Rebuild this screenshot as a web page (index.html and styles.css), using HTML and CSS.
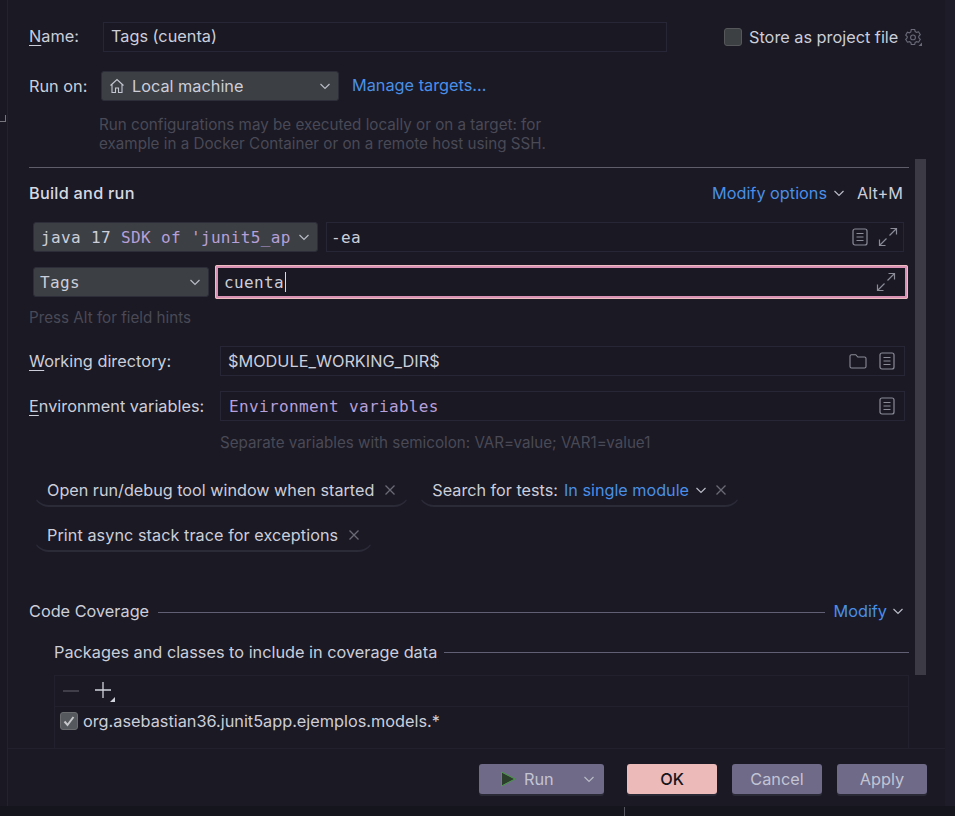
FILE: index.html
```html
<!DOCTYPE html>
<html lang="en">
<head>
<meta charset="utf-8">
<title>Run/Debug Configurations</title>
<link rel="stylesheet" href="styles.css">
</head>
<body>
<svg class="defs" width="0" height="0" aria-hidden="true">
  <symbol id="chev" viewBox="0 0 12 12"><path d="M1.500 4l4.500 4.500L10.500 4" fill="none" stroke="currentColor" stroke-width="1.200"/></symbol>
  <symbol id="doc" viewBox="0 0 16 18"><rect x="1" y="1" width="14" height="16" rx="2" fill="none" stroke="currentColor" stroke-width="1.200"/><path d="M4.500 5.500h7M4.500 9h7M4.500 12.500h7" fill="none" stroke="currentColor" stroke-width="1.200"/></symbol>
  <symbol id="expand" viewBox="0 0 20 20"><path d="M11.500 8.500L18.500 1.500M12.500 1.500h6v6M8.500 11.500L1.500 18.500M1.500 12.500v6h6" fill="none" stroke="currentColor" stroke-width="1.200"/></symbol>
  <symbol id="close" viewBox="0 0 12 12"><path d="M1.500 1.500l9 9M10.500 1.500l-9 9" fill="none" stroke="currentColor" stroke-width="1.300"/></symbol>
</svg>
<div class="window">
  <div class="strip-left"><span class="strip-mark"></span></div>
  <div class="dialog">
    <main class="pane">
      <div class="thumb"></div>

      <div class="row row-name">
        <label class="label label-name"><u>N</u>ame:</label>
        <div class="field field-name">Tags (cuenta)</div>
        <span class="check"></span>
        <span class="store">Store as project file</span>
        <svg class="gear" viewBox="0 0 18 18" width="18" height="18"><path d="M7.300 1.500h3.400l.5 2.100 1.400.8 2-.6 1.700 2.900-1.500 1.500v1.600l1.500 1.500-1.700 2.900-2-.6-1.400.8-.5 2.100H7.300l-.5-2.100-1.400-.8-2 .6-1.700-2.900 1.500-1.500V8.600L1.700 7.100l1.700-2.900 2 .6 1.400-.8z" fill="none" stroke="#6a6a78" stroke-width="1.100"/><circle cx="9" cy="9.400" r="2.400" fill="none" stroke="#6a6a78" stroke-width="1.100"/><path d="M18 14.500V18h-3.500z" fill="#6a6a78"/></svg>
      </div>

      <div class="row row-run">
        <span class="label label-run">Run on:</span>
        <div class="select select-run">
          <svg class="home" viewBox="0 0 16 16" width="16" height="16"><path d="M1.500 7.500L8 1.500l6.500 6M3 6.500V14.500h3.500V10h3v4.500H13V6.500" fill="none" stroke="#c4c7d2" stroke-width="1.100"/></svg>
          <span class="grow">Local machine</span>
          <svg class="chev"><use href="#chev"/></svg>
        </div>
        <a class="link link-targets">Manage targets...</a>
      </div>

      <p class="hint hint-run">Run configurations may be executed locally or on a target: for<br>example in a Docker Container or on a remote host using SSH.</p>

      <div class="sep"></div>

      <div class="row row-build">
        <strong class="section-title">Build and run</strong>
        <a class="link link-modify">Modify options</a>
        <svg class="chev chev-modify"><use href="#chev"/></svg>
        <span class="shortcut">Alt+M</span>
      </div>

      <div class="row row-java">
        <div class="select select-java mono">
          <span class="java-text"><span class="w">java 17</span> SDK of 'junit5_ap</span>
          <svg class="chev"><use href="#chev"/></svg>
        </div>
        <div class="field field-ea mono">
          <span class="grow w">-ea</span>
          <svg class="ico-doc"><use href="#doc"/></svg>
          <svg class="ico-expand"><use href="#expand"/></svg>
        </div>
      </div>

      <div class="row row-tags">
        <div class="select select-tags mono">
          <span class="grow">Tags</span>
          <svg class="chev"><use href="#chev"/></svg>
        </div>
        <div class="field-focus mono">
          <span class="w">cuenta</span><span class="caret"></span>
          <span class="grow"></span>
          <svg class="ico-expand"><use href="#expand"/></svg>
        </div>
      </div>

      <p class="hint hint-alt">Press Alt for field hints</p>

      <div class="row row-wd">
        <label class="label label-wide"><u>W</u>orking directory:</label>
        <div class="field field-wide">
          <span class="grow">$MODULE_WORKING_DIR$</span>
          <svg class="ico-folder" viewBox="0 0 18 16" width="18" height="16"><path d="M1 3.200a1.500 1.500 0 0 1 1.500-1.500h4.300l2 2.300h6.700A1.500 1.500 0 0 1 17 5.500v8a1.500 1.500 0 0 1-1.500 1.500h-13A1.500 1.500 0 0 1 1 13.500z" fill="none" stroke="#8a8b97" stroke-width="1.100"/></svg>
          <svg class="ico-doc ico-doc-end"><use href="#doc"/></svg>
        </div>
      </div>

      <div class="row row-env">
        <label class="label label-wide"><u>E</u>nvironment variables:</label>
        <div class="field field-wide">
          <span class="grow mono env-text">Environment variables</span>
          <svg class="ico-doc ico-doc-end"><use href="#doc"/></svg>
        </div>
      </div>

      <p class="hint hint-env">Separate variables with semicolon: VAR=value; VAR1=value1</p>

      <div class="chips">
        <div class="chip"><span>Open run/debug tool window when started</span><svg class="x"><use href="#close"/></svg></div>
        <div class="chip chip-search"><span>Search for tests: <a class="link link-chip">In single module</a></span><svg class="chev chev-chip"><use href="#chev"/></svg><svg class="x"><use href="#close"/></svg></div>
        <div class="chip chip-print"><span>Print async stack trace for exceptions</span><svg class="x"><use href="#close"/></svg></div>
      </div>

      <div class="row row-cov">
        <span class="cov-title">Code Coverage</span>
        <span class="rule"></span>
        <a class="link">Modify</a>
        <svg class="chev chev-cov"><use href="#chev"/></svg>
      </div>

      <div class="row row-pkg">
        <span class="cov-title">Packages and classes to include in coverage data</span>
        <span class="rule"></span>
      </div>

      <div class="table">
        <div class="toolbar">
          <svg class="tool-minus" viewBox="0 0 16 16" width="16" height="16"><path d="M0 8h16" stroke="#55555f" stroke-width="1.300"/></svg>
          <svg class="tool-plus" viewBox="0 0 20 20" width="20" height="20"><path d="M8 0v16M0 8h16" stroke="#d0d2dc" stroke-width="1.300" fill="none"/><path d="M20 15v5h-5z" fill="#d0d2dc"/></svg>
        </div>
        <div class="table-row">
          <span class="check check-on"><svg viewBox="0 0 18 18" width="18" height="18"><path d="M4.500 9.500l3 3.500 6-8" fill="none" stroke="#c4c6ca" stroke-width="2"/></svg></span>
          <span>org.asebastian36.junit5app.ejemplos.models.*</span>
        </div>
      </div>
    </main>

    <footer class="footer">
      <button class="btn btn-run">
        <svg class="play" viewBox="0 0 16 16" width="16" height="16"><path d="M1.500 1L15 8 1.500 15z" fill="#2b3f2c" stroke="#4f9a4f" stroke-width="1"/></svg>
        <span class="grow run-text">Run</span>
        <svg class="chev"><use href="#chev"/></svg>
      </button>
      <button class="btn btn-ok">OK</button>
      <button class="btn">Cancel</button>
      <button class="btn">Apply</button>
    </footer>
  </div>
  <div class="strip-right"></div>
</div>
<div class="bottom-strip"><span class="bottom-tick"></span></div>
</body>
</html>
```

FILE: styles.css
```css
* { box-sizing: border-box; }
html, body { margin: 0; height: 816px; overflow: hidden; background: #15151e; }
body { font-family: Inter, "Noto Sans", sans-serif; font-size: 16.3px; color: #ccced9; }
p { margin: 0; }
u { text-underline-offset: 3px; text-decoration-thickness: 1px; }
.defs { position: absolute; }
.window { display: flex; height: 806px; }
.strip-left { flex: none; width: 8px; background: #191823; border-right: 1px solid #23222e; position: relative; }
.strip-mark { position: absolute; left: 0; top: 115px; width: 6px; height: 7px; border-right: 1px solid #77767f; border-bottom: 1px solid #77767f; }
.strip-right { flex: none; width: 10px; background: #1d1c28; }
.dialog { flex: 1; min-width: 0; display: flex; flex-direction: column; background: #1a1924; }
.pane { flex: 1; position: relative; padding: 22px 36px 0 21px; overflow: hidden; }
.thumb { position: absolute; left: 907px; top: 159px; width: 11px; height: 516px; background: #3b3a45; }
.row { display: flex; align-items: center; }
.grow { flex: 1; }
.mono { font-family: "DejaVu Sans Mono", "Liberation Mono", monospace; font-size: 16px; letter-spacing: .36px; }
.w { color: #ccced9; }
.link { color: #4a8fe7; }
.label { white-space: nowrap; }

.row-name { height: 30px; }
.label-name { flex: none; width: 74px; padding-bottom: 2px; }
.field { flex: none; height: 30px; display: flex; align-items: center; border: 1px solid #272636; background: #191823; padding: 0 7px; }
.field-name { width: 564px; margin-right: 57px; padding: 0 0 2px 7px; }
.check { display: inline-flex; width: 18px; height: 18px; border-radius: 3px; background: #3d4043; border: 1px solid #55575b; flex: none; }
.store { flex: none; margin-left: 7px; white-space: nowrap; }
.gear { margin-left: 6px; flex: none; }

.row-run { height: 30px; margin-top: 19px; }
.label-run { width: 72px; }
.select { height: 30px; display: flex; align-items: center; background: #3c3f43; border: 1px solid #2d2d39; border-radius: 3px; padding: 0 7px; }
.select-run { width: 238px; }
.home { margin-right: 7px; flex: none; }
.chev { width: 12px; height: 12px; color: #b9bbc6; flex: none; }
.link-targets { margin-left: 13px; position: relative; top: -1px; }

.hint { color: #4a4956; font-size: 15.2px; line-height: 19px; white-space: nowrap; }
.hint-run { margin-top: 14px; padding-left: 70px; }
.sep { height: 1px; margin-top: 14px; background: #5e5d69; }

.row-build { height: 20px; margin-top: 15px; }
.section-title { font-weight: 500; letter-spacing: .25px; color: #d6d8e2; margin-right: auto; }
.chev-modify { margin-left: 6px; }
.shortcut { margin-left: 12px; margin-right: 6px; }

.row-java { height: 30px; margin-top: 19px; margin-left: 4px; }
.select-java { width: 285px; margin-right: 8px; color: #b79fd8; }
.java-text { flex: 1; white-space: nowrap; overflow: hidden; }
.field-ea { width: 578px; padding: 0 5px 0 4px; }
.ico-doc { width: 16px; height: 18px; color: #8a8b97; flex: none; }
.ico-expand { width: 20px; height: 20px; color: #8a8b97; flex: none; margin-left: 10px; }

.row-tags { height: 34px; margin-top: 13px; margin-left: 4px; }
.select-tags { width: 176px; margin-right: 6px; padding-left: 6px; color: #ccced9; }
.field-focus { flex: none; width: 693px; height: 34px; display: flex; align-items: center; padding: 0 9px 0 6px; background: #191823; border: 3px solid #d992b4; outline: 1px solid #ecbcc0; outline-offset: -1px; border-radius: 2px; }
.caret { width: 1px; height: 20px; background: #d9dbe3; margin-left: 1px; }

.hint-alt { margin-top: 9px; height: 20px; }
.row-wd { height: 30px; margin-top: 18px; }
.row-env { height: 30px; margin-top: 15px; }
.label-wide { width: 191px; }
.field-wide { width: 685px; padding-right: 9px; }
.ico-folder { flex: none; margin-right: 12px; }
.env-text { color: #b79fd8; margin-left: 1px; }
.hint-env { margin-top: 12px; height: 20px; padding-left: 191px; }

.chips { display: flex; flex-wrap: wrap; gap: 13px 8px; margin: 22px 0 0 4px; width: 760px; font-size: 16.2px; }
.chip { display: flex; align-items: center; height: 32px; padding: 0 13px 1px 13px; border: 1px solid transparent; border-bottom: 2px solid #2b2a37; border-radius: 16px; white-space: nowrap; }
.x { width: 12px; height: 12px; color: #6a6a76; margin-left: 10px; flex: none; }
.link-chip { margin-left: 1.5px; }
.chev-chip { margin-left: 6px; }
.chip-search .x { margin-left: 8px; }
.chip-print span { letter-spacing: .07px; }

.row-cov { height: 20px; margin-top: 49px; padding-right: 5px; }
.rule { flex: 1; height: 1px; background: #615f73; margin: 2px 8px 0 9px; }
.chev-cov { margin-left: 5px; }
.row-pkg { height: 20px; margin-top: 21px; padding-left: 25px; }
.row-pkg .rule { margin: 0 0 0 7px; }

.table { margin: 13px 0 0 25px; width: 855px; height: 73px; border: 1px solid #21202c; border-bottom: 0; }
.toolbar { height: 31px; display: flex; align-items: center; padding-left: 8px; border-bottom: 1px solid #21202c; }
.tool-plus { margin-left: 16px; margin-top: 2px; }
.table-row { display: flex; align-items: center; gap: 5px; height: 28px; padding-left: 5px; }
.check-on { background: #55585c; border-color: #6a6c70; }
.check-on svg { margin: -1px; }

.footer { height: 58px; display: flex; padding: 15px 18px 0 0; justify-content: flex-end; gap: 15px; background: #1a1924; border-top: 1px solid #21202c; }
.btn { width: 90px; height: 30px; background: #6e6a88; color: #c3c4d3; border: 0; border-radius: 3px; font: inherit; box-shadow: 0 2px 0 #2a2936; padding: 0; }
.btn-ok { background: #ecbab9; color: #16151e; font-weight: 500; }
.btn-run { width: 125px; margin-right: 8px; display: flex; align-items: center; padding: 0 9px 0 21px; text-align: left; }
.run-text { margin-left: 8px; }

.bottom-strip { height: 10px; position: relative; background: #15151e; }
.bottom-tick { position: absolute; left: 624px; top: 1px; width: 1px; height: 9px; background: #55555f; }
```
